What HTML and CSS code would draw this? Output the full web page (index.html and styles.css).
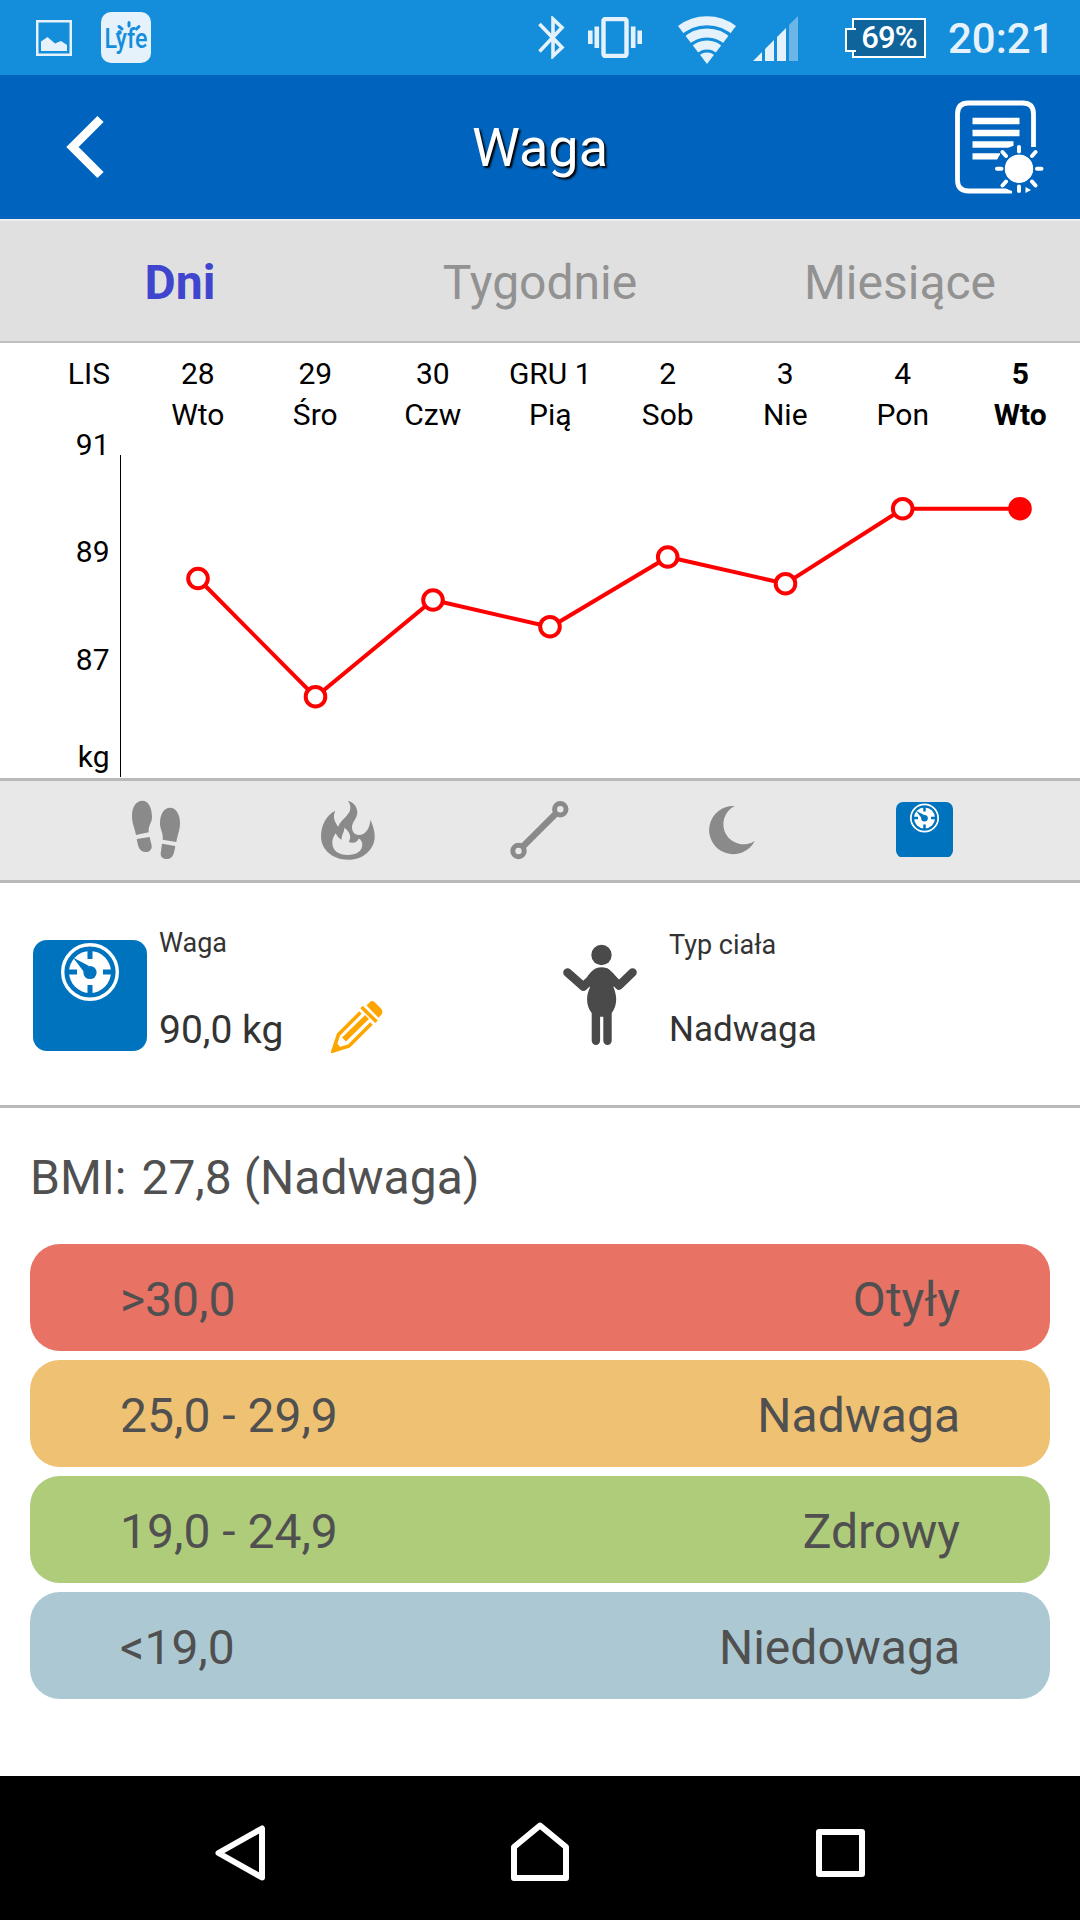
FILE: index.html
```html
<!DOCTYPE html>
<html lang="pl">
<head>
  <meta charset="utf-8">
  <title>Waga</title>
  <link rel="stylesheet" href="styles.css">
</head>
<body>
  <!-- shared icons -->
  <svg class="defs" width="0" height="0">
    <symbol id="scale" viewBox="0 0 114 111">
      <rect width="114" height="111" rx="14" fill="#0073be"/>
      <circle cx="57" cy="32" r="27.3" fill="none" stroke="#fff" stroke-width="3.4"/>
      <circle cx="57" cy="32" r="21" fill="#fff"/>
      <path d="M57 10v9M57 45v9M35 32h9M70 32h9" stroke="#0073be" stroke-width="5"/>
      <circle cx="57" cy="32.5" r="6.6" fill="#0073be"/>
      <path d="M40 17.5l16 8.5-5 6z" fill="#0073be"/>
    </symbol>
  </svg>

  <div class="status-bar">
    <svg class="st-picture" width="36" height="36" viewBox="0 0 36 36">
      <rect x="1.25" y="1.25" width="33.5" height="33.5" fill="none" stroke="#e5f2fb" stroke-width="2.5"/>
      <path d="M5 31V21.5L11.5 17l7.5 6.5 6-2.5 6 4V31z" fill="#e5f2fb"/>
    </svg>
    <svg class="st-lyfe" width="50" height="51" viewBox="0 0 50 51">
      <rect width="50" height="51" rx="10" fill="#e5f2fb"/>
      <text class="lyfe-text" x="3.5" y="36" textLength="43" lengthAdjust="spacingAndGlyphs">Lyfe</text>
      <circle cx="18.5" cy="20.5" r="2.2"/>
      <path d="M28 10.5v3.500M18 14.5l3 2.500M38 14.5l-2.500 2.500" stroke="#148ddb" stroke-width="3" stroke-linecap="round"/>
    </svg>

    <div class="status-right">
      <svg class="st-bt" width="27" height="43" viewBox="0 0 27 43">
        <path d="M1.500 8L24 31.5 15 40V3l9 8.500L1.500 35.5" fill="none" stroke="#e5f2fb" stroke-width="3.6"/>
      </svg>
      <svg class="st-vibrate" width="54" height="41" viewBox="0 0 54 41">
        <rect x="15.5" y="2" width="23" height="37" rx="2" fill="none" stroke="#e5f2fb" stroke-width="4.4"/>
        <path d="M2.300 13.5v13.5M8.800 9.5v21.5M45.2 9.5v21.5M51.7 13.5v13.5" stroke="#e5f2fb" stroke-width="4.6"/>
      </svg>
      <svg class="st-wifi" width="58" height="48" viewBox="0 0 58 48">
        <defs><clipPath id="fan"><path d="M29 48L-3 6V-4H61V6z"/></clipPath></defs>
        <g clip-path="url(#fan)">
          <circle cx="29" cy="48" r="11.5" fill="#e5f2fb"/>
          <g fill="none" stroke="#e5f2fb" stroke-width="9">
            <circle cx="29" cy="48" r="19"/>
            <circle cx="29" cy="48" r="31"/>
            <circle cx="29" cy="48" r="43.3"/>
          </g>
        </g>
      </svg>
      <svg class="st-signal" width="45" height="45" viewBox="0 0 45 45">
        <path d="M0 45l9-9v9zM12 45V33l9-9v21zM24 45V21l9-9v33z" fill="#e5f2fb"/>
        <path d="M36 45V9l9-9v45z" fill="#6bb5e7"/>
      </svg>
      <div class="battery">69%</div>
      <div class="clock">20:21</div>
    </div>
  </div>

  <div class="header">
    <svg width="60" height="72" viewBox="0 0 60 72">
      <path d="M46.500 8L18.5 36l28 28" fill="none" stroke="#fff" stroke-width="8.8"/>
    </svg>
    <h1>Waga</h1>
    <svg width="94" height="96" viewBox="0 0 94 96">
      <path d="M83.5 48V15Q83.5 4 72.5 4H18.5Q7.500 4 7.500 15V81Q7.500 92 18.5 92H62" fill="none" stroke="#fff" stroke-width="4.8"/>
      <path d="M22.5 22H69.5M22.5 34H69.5M22.5 45.5H63.5M22.5 57.3H50" stroke="#fff" stroke-width="6.3"/>
      <circle cx="69" cy="69.7" r="14.3" fill="#fff"/>
      <circle class="halo" cx="69" cy="69.7" r="19"/>
      <path d="M69 48v4.500M69 87.5v4.500M47 69.7h4.500M87 69.7h4.500M52.5 53l3.500 4M82 57l3.500-4M52.5 86.5l3.500-4M82 82.5l3.500 4" stroke="#fff" stroke-width="4" stroke-linecap="round"/>
      <path d="M75.500 88v6l5.500-3z" fill="#fff"/>
    </svg>
  </div>

  <div class="tabs">
    <div class="tab active">Dni</div>
    <div class="tab">Tygodnie</div>
    <div class="tab">Miesiące</div>
  </div>

  <div class="chart">
    <div class="dates">
      <div class="month">LIS</div>
      <div>28<br>Wto</div>
      <div>29<br>Śro</div>
      <div>30<br>Czw</div>
      <div>GRU 1<br>Pią</div>
      <div>2<br>Sob</div>
      <div>3<br>Nie</div>
      <div>4<br>Pon</div>
      <div class="today">5<br>Wto</div>
    </div>
    <svg class="plot" width="1080" height="343" viewBox="0 0 1080 343">
      <g class="y-labels">
        <text x="109.5" y="19.5">91</text>
        <text x="109.5" y="127">89</text>
        <text x="109.5" y="235">87</text>
        <text x="109.5" y="331.5">kg</text>
      </g>
      <path d="M120.5 20V342" stroke="#000"/>
      <polyline class="line" points="198,143.5 315.5,262 433,165 550.5,192 668,122 785.5,148.7 903,73.7 1020,73.7"/>
      <g class="dots">
        <circle cx="198" cy="143.5" r="9.8"/>
        <circle cx="315.5" cy="261.7" r="9.8"/>
        <circle cx="433" cy="165" r="9.8"/>
        <circle cx="550" cy="191.7" r="9.8"/>
        <circle cx="667.7" cy="122" r="9.8"/>
        <circle cx="785.5" cy="148.7" r="9.8"/>
        <circle cx="902.7" cy="73.7" r="9.8"/>
        <circle class="last" cx="1020" cy="73.7" r="9.8"/>
      </g>
    </svg>
  </div>

  <div class="metrics">
    <!-- steps -->
    <svg width="60" height="60" viewBox="0 0 60 60" fill="#8a8a8a">
      <path d="M16.3.7C22.5.7 26 8 26 17c0 6.500-4 8-3.300 15.3L10 35C8.500 27 6 24 6 16 6 7 10 .7 16.3.7z"/>
      <path d="M10.7 39l13-2c.5 4 2 6.500 2 9.700 0 3-2.700 5.300-5.700 5.300-7 0-8-6-9.300-13z"/>
      <path d="M44 7.700c6.500 0 10 7.300 10 15.3 0 7-2.300 11-3.700 19l-13.6-2.300C37.5 32 34 30 34 23.5 34 14 38 7.700 44 7.700z"/>
      <path d="M36 43.7L49.3 46c-1 6-1.800 13-8.300 13-4 0-6.600-2-6.300-5.500z"/>
    </svg>
    <!-- calories -->
    <svg width="60" height="60" viewBox="0 0 60 60" fill="#8a8a8a">
      <path fill-rule="evenodd" d="M29.7.7C36 2.500 39.3 7 39.3 12.5c0 6-5.300 9-5.300 15C34 32 37 35 41 35c6 0 10.5-5.500 11.5-15.3 2 5 4.200 10.5 4.200 16.5C56.7 49 46 59.7 30 59.7S3 49 3 36.5C3 25 8.500 15 17.3 10.7c-2.800 6-.8 11.3 3 16C22.5 19 33.5 15 32.3 6.500 32 4 31 2.200 29.7.7zM17.7 33.3c-2 3-3.400 6-3.400 9.200C14.3 51 21 55 29.7 55S44.3 51 44.3 44.5c0-2.500-1.300-5-3.600-6-1 3.500-5.200 5.500-10 3.500 3.500-6 .3-11-4.500-14.3.5 4.500-2.800 6.300-2.500 12-3-1.500-4.500-3.500-6-6.400z"/>
    </svg>
    <!-- distance -->
    <svg width="60" height="60" viewBox="0 0 60 60" fill="none" stroke="#8a8a8a">
      <circle cx="50.3" cy="9.3" r="5.7" stroke-width="5"/>
      <circle cx="8.5" cy="51" r="5.7" stroke-width="5"/>
      <path d="M46 13.5L12.7 46.8" stroke-width="6.5"/>
    </svg>
    <!-- sleep -->
    <svg width="60" height="60" viewBox="0 0 60 60" fill="#8a8a8a">
      <path d="M32.7 6A24.1 24.1 0 1 0 52.7 41 20.2 20.2 0 1 1 32.7 6z"/>
    </svg>
    <svg width="57" height="55.5"><use href="#scale"/></svg>
  </div>

  <div class="info">
    <div class="card weight">
      <svg width="114" height="111"><use href="#scale"/></svg>
      <div class="card-text">
        <div class="label">Waga</div>
        <div class="value">90,0 kg</div>
      </div>
      <svg class="pencil" width="52" height="52" viewBox="0 0 52 52" fill="#ffa500">
        <path d="M35.5 4.500L39 1q2-2 5 .5l6 6q2.500 3 .5 6l-3 3.300z"/>
        <path d="M30.5 6l15 14.8" stroke="#ffa500" stroke-width="3.6"/>
        <path d="M29.5 11.5L7.500 33.5 2 50l16-5L40.5 22.5" fill="none" stroke="#ffa500" stroke-width="3.6"/>
        <path d="M2 50l3-9 5 6z"/>
        <path d="M13 38.5L36 16" stroke="#ffa500" stroke-width="5.5"/>
      </svg>
    </div>
    <div class="card body-type">
      <svg width="74" height="102" viewBox="0 0 74 102" fill="#4a4a4a">
        <circle cx="38.5" cy="11" r="10.2"/>
        <path d="M4.500 28.5L20.3 42.5 35 29M69.5 28.5L56 41.5 43 28.5" fill="none" stroke="#4a4a4a" stroke-width="8.6" stroke-linecap="round" stroke-linejoin="round"/>
        <path d="M38.5 23.3c-7 0-10 4-14 9l2.500 11C22 54 24 63 28.7 69v27.7a4.200 4.200 0 0 0 8.400 0V72.7h3.200v24a4.200 4.200 0 0 0 8.400 0V69C53.5 63 55 54 50.5 43.3l3-10c-4-5-8-10-15-10z"/>
      </svg>
      <div class="card-text">
        <div class="label">Typ ciała</div>
        <div class="value">Nadwaga</div>
      </div>
    </div>
  </div>

  <div class="bmi">
    <div class="bmi-title"><span>BMI:</span> 27,8 (Nadwaga)</div>
    <div class="range obese"><span>&gt;30,0</span><span>Otyły</span></div>
    <div class="range over"><span>25,0 - 29,9</span><span>Nadwaga</span></div>
    <div class="range healthy"><span>19,0 - 24,9</span><span>Zdrowy</span></div>
    <div class="range under"><span>&lt;19,0</span><span>Niedowaga</span></div>
  </div>

  <div class="nav-bar">
    <svg width="72" height="72" viewBox="0 0 72 72"><path d="M58 16.5V65.5L14.5 41z"/></svg>
    <svg width="72" height="72" viewBox="0 0 72 72"><path d="M36 13.5L10 35V66H62V35z"/></svg>
    <svg width="72" height="72" viewBox="0 0 72 72"><path d="M15 20H58V62H15z"/></svg>
  </div>
</body>
</html>
```
FILE: styles.css
```css
* {
  box-sizing: border-box;
}

body {
  margin: 0;
  width: 1080px;
  height: 1920px;
  display: flex;
  flex-direction: column;
  background: #fff;
  font-family: Roboto, sans-serif;
  overflow: hidden;
}

svg {
  display: block;
  flex: none;
}

.defs {
  position: absolute;
}

/* status bar */
.status-bar {
  height: 75px;
  flex: none;
  display: flex;
  align-items: center;
  padding: 0 26px 0 36px;
  background: #148ddb;
}

.st-lyfe {
  margin-left: 29px;
  fill: #148ddb;
}

.lyfe-text {
  font-size: 27px;
  font-weight: 500;
}

.status-right {
  display: flex;
  align-items: center;
  margin-left: auto;
}

.st-vibrate {
  margin-left: 23px;
}

.st-wifi {
  margin: 5px 0 0 36px;
}

.st-signal {
  margin: 2px 0 0 17px;
}

.battery {
  position: relative;
  width: 74px;
  height: 40px;
  margin-left: 54px;
  border: 2px solid #fff;
  background: #0f649c;
  color: #fff;
  font-size: 31px;
  font-weight: 500;
  line-height: 36px;
  text-align: center;
  letter-spacing: -0.8px;
}

.battery::before {
  content: "";
  position: absolute;
  left: -9px;
  top: 8px;
  width: 9px;
  height: 20px;
  border: 2px solid #fff;
  border-right: 0;
  background: #0f649c;
}

.clock {
  width: 106px;
  margin-left: 22px;
  color: #e5f2fb;
  font-size: 42px;
  font-weight: 500;
  line-height: 72px;
  padding-top: 3px;
  white-space: nowrap;
}

/* header */
.header {
  height: 144px;
  flex: none;
  display: grid;
  grid-template-columns: 102px 1fr 102px;
  align-items: center;
  padding: 0 28px 0 54px;
  background: #0063bd;
}

.header h1 {
  margin: 0 26px 0 0;
  color: #fff;
  font-size: 54px;
  font-weight: 400;
  text-align: center;
  text-shadow: 2px 2px 2px #000;
}

/* gap between the sun and the sheet */
.halo {
  fill: none;
  stroke: #0063bd;
  stroke-width: 9;
}

/* tabs */
.tabs {
  height: 124px;
  flex: none;
  display: grid;
  grid-template-columns: repeat(3, 1fr);
  border-top: 2px solid #eee;
  border-bottom: 2px solid #c0c0c0;
  background: #e0e0e0;
}

.tab {
  color: #929292;
  font-size: 48px;
  line-height: 123px;
  text-align: center;
}

.tab.active {
  color: #3f46cd;
  font-weight: 700;
}

/* chart */
.chart {
  height: 435px;
  flex: none;
  color: #000;
  font-size: 30px;
}

.dates {
  height: 92px;
  display: grid;
  grid-template-columns: 139px repeat(8, 117.5px);
  padding-top: 10px;
  line-height: 41px;
  text-align: center;
}

.dates .month {
  padding-right: 29px;
  text-align: right;
}

.today {
  font-weight: 700;
}

.plot {
  overflow: visible;
}

.y-labels {
  text-anchor: end;
}

.line {
  fill: none;
  stroke: #f00;
  stroke-width: 4;
}

.dots {
  fill: #fff;
  stroke: #f00;
  stroke-width: 4;
}

.dots .last {
  fill: #f00;
}

/* metric icons */
.metrics {
  height: 105px;
  flex: none;
  display: grid;
  grid-template-columns: repeat(5, 192px);
  justify-content: center;
  justify-items: center;
  align-items: center;
  padding-bottom: 2px;
  border-top: 3px solid #b9b9b9;
  border-bottom: 3px solid #b9b9b9;
  background: #e8e8e8;
}

/* weight / body type */
.info {
  height: 225px;
  flex: none;
  display: grid;
  grid-template-columns: 530px 1fr;
  border-bottom: 3px solid #b9b9b9;
  color: #333;
}

.card {
  display: flex;
  align-items: flex-start;
  padding: 57px 0 0 33px;
}

.card.body-type {
  padding-top: 61px;
}

.card-text {
  display: flex;
  flex-direction: column;
  margin-left: 12px;
}

.label {
  font-size: 27px;
  line-height: 32px;
  margin-top: -13px;
}

.value {
  font-size: 39px;
  line-height: 46px;
  margin-top: 48px;
}

.pencil {
  margin: 61px 0 0 48px;
}

.body-type .card-text {
  margin: -2px 0 0 32px;
}

.body-type .value {
  font-size: 35px;
  margin-top: 46px;
}

/* BMI */
.bmi {
  flex: 1;
  display: flex;
  flex-direction: column;
  gap: 9px;
  padding: 0 30px;
  color: #505050;
  font-size: 48px;
}

.bmi-title {
  height: 127px;
  line-height: 140px;
}

.bmi-title span {
  margin-right: 3px;
}

.range {
  height: 107px;
  display: flex;
  justify-content: space-between;
  align-items: center;
  padding: 3px 90px 0;
  border-radius: 30px;
}

.obese {
  background: #e87264;
}

.over {
  background: #efc172;
}

.healthy {
  background: #afcc7b;
}

.under {
  background: #acc9d3;
}

/* android navigation */
.nav-bar {
  height: 144px;
  flex: none;
  display: grid;
  grid-template-columns: repeat(3, 300px);
  justify-content: center;
  justify-items: center;
  align-items: center;
  background: #000;
}

.nav-bar svg {
  fill: none;
  stroke: #fff;
  stroke-width: 6;
  stroke-linejoin: round;
}
```
